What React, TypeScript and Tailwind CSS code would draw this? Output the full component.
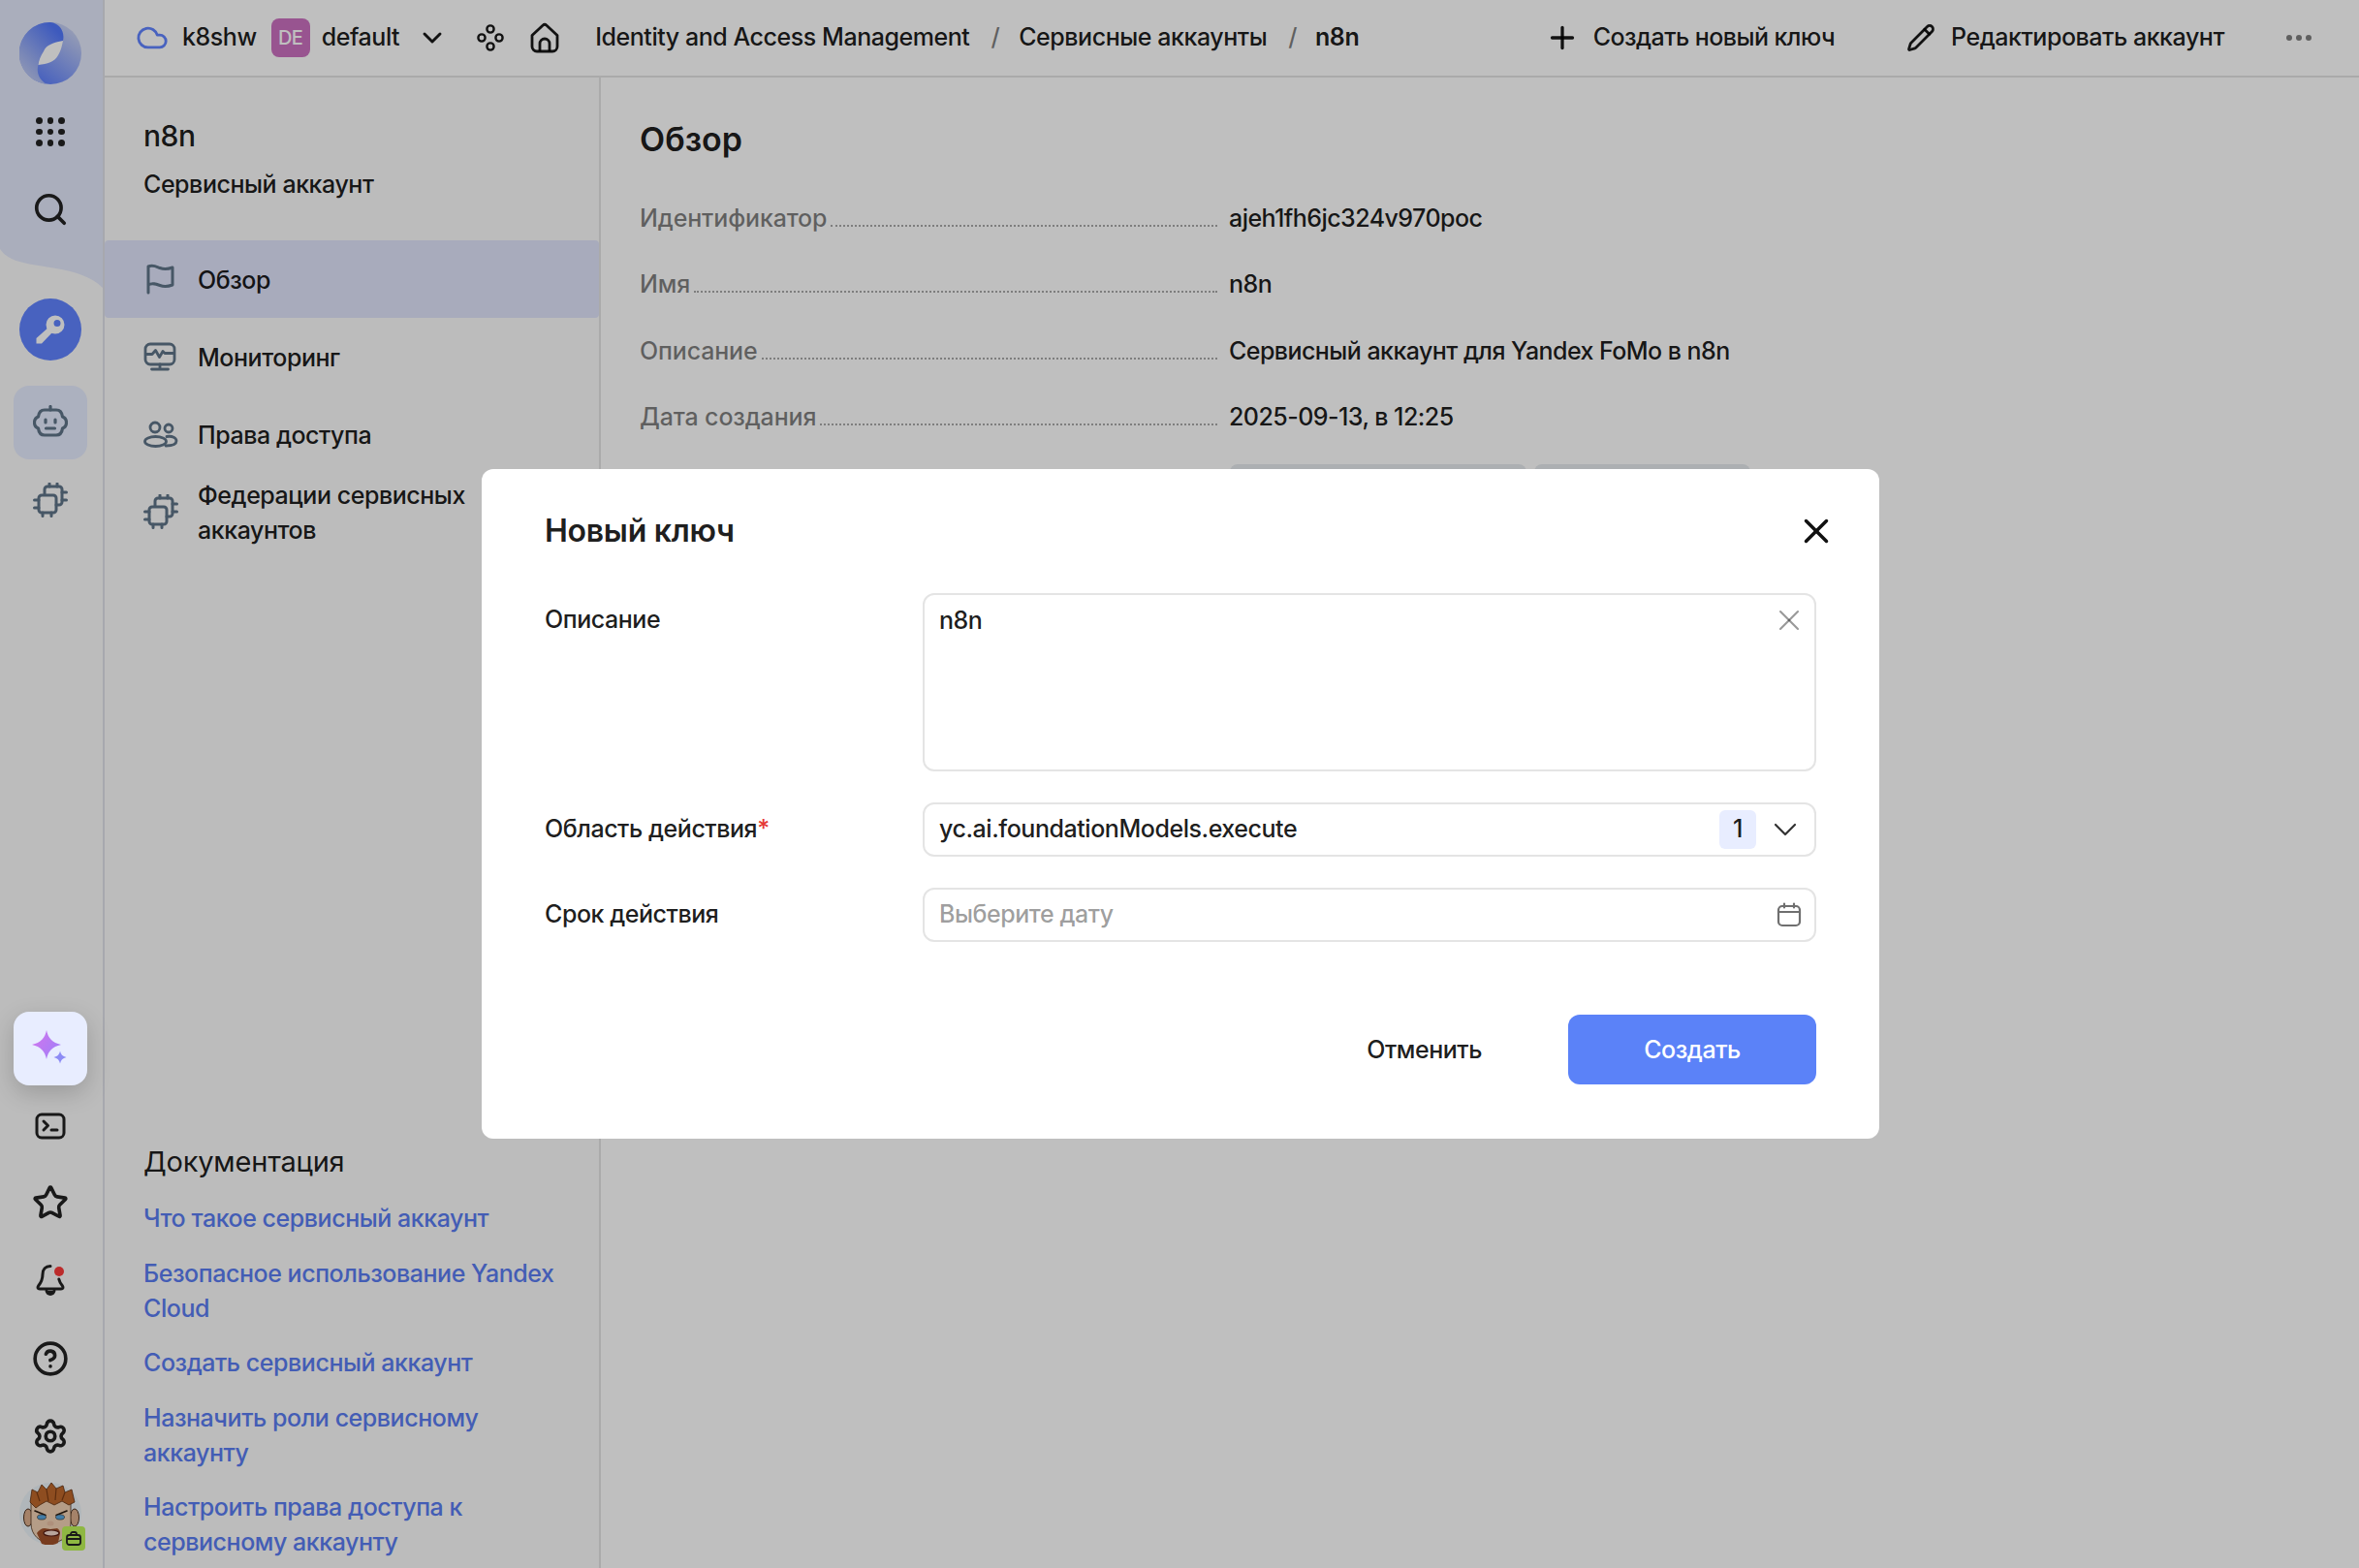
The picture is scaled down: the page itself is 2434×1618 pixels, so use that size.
import React from 'react';
import { ChevronDown, Cloud, Pencil, Plus, X, Search, Star, Settings, CircleHelp } from 'lucide-react';

const iconGray = '#5f7488';

const FlowerIcon = () => (
  <svg width="30" height="30" viewBox="0 0 30 30" fill="none" stroke="currentColor" strokeWidth="2.4">
    <circle cx="15" cy="6" r="3.6" />
    <circle cx="6" cy="15" r="3.6" />
    <circle cx="24" cy="15" r="3.6" />
    <circle cx="15" cy="24" r="3.6" />
  </svg>
);

const HomeIcon = () => (
  <svg width="30" height="32" viewBox="0 0 30 32" fill="none" stroke="currentColor" strokeWidth="2.8" strokeLinejoin="round">
    <path d="M2 13.5 13 3.2a3 3 0 0 1 4 0L28 13.5V25a5 5 0 0 1-5 5H7a5 5 0 0 1-5-5z" />
    <path d="M10 30v-8a5 5 0 0 1 10 0v8" />
  </svg>
);

const Logo = () => (
  <svg width="64" height="64" viewBox="0 0 64 64">
    <defs>
      <linearGradient id="logo-a" x1="0.15" y1="1" x2="0.85" y2="0.1">
        <stop offset="0" stopColor="#4f75ff" />
        <stop offset="1" stopColor="#c9d2f2" />
      </linearGradient>
      <linearGradient id="logo-b" x1="0.1" y1="0.9" x2="0.75" y2="0.05">
        <stop offset="0" stopColor="#c3cdf1" />
        <stop offset="1" stopColor="#5278fd" />
      </linearGradient>
    </defs>
    <circle cx="32" cy="32" r="32" fill="url(#logo-a)" />
    <path d="M32 0A32 32 0 0 0 28 63.8C21 60 17 52 19.5 44 21 30 35 26 45 19 47 10 42 1 32 0z" fill="url(#logo-b)" />
    <path d="M45 19C35 21 28 23 25 30 22 35 20 39 19.5 44 29 43 36 41 40 34 43 29 44 24 45 19z" fill="#fff" />
  </svg>
);

const DotsGrid = () => (
  <div className="grid grid-cols-3 gap-[5px]">
    {Array.from({ length: 9 }).map((_, i) => (
      <span key={i} className="w-[6.5px] h-[6.5px] rounded-full bg-[#222]" />
    ))}
  </div>
);

const KeyIcon = () => (
  <svg width="32" height="32" viewBox="0 0 32 32" fill="none">
    <path fillRule="evenodd" clipRule="evenodd" d="M21 1.500a9.500 9.500 0 1 1 0 19 9.500 9.500 0 0 1 0-19zm2 4.500a3.500 3.500 0 1 0 0 7 3.500 3.500 0 0 0 0-7z" fill="#fff" />
    <path d="M15 13 1.500 25v5.500H7L19 18z" fill="#fff" />
  </svg>
);

const RobotIcon = () => (
  <svg width="36" height="36" viewBox="0 0 36 36" fill="none" stroke={iconGray} strokeWidth="3.2" strokeLinecap="round" strokeLinejoin="round">
    <path d="M18 1.500V5" />
    <path d="M12 5h12c4 0 6 3 6.500 7 2.500 1 4 3 4 6s-1.500 5-4 6c-.5 4-2.500 7-6.500 7H12c-4 0-6-3-6.500-7-2.500-1-4-3-4-6s1.500-5 4-6C6 8 8 5 12 5z" />
    <path d="M13 15v3M23 15v3M13.500 24h9" />
  </svg>
);

const ChipsIcon = () => (
  <svg width="36" height="36" viewBox="0 0 36 36" fill="none" stroke={iconGray} strokeWidth="3" strokeLinecap="round" strokeLinejoin="round">
    <rect x="6" y="13" width="18" height="18" rx="3" />
    <path d="M12 12.500V7a3 3 0 0 1 3-3h12a3 3 0 0 1 3 3v13a3 3 0 0 1-3 3h-3" />
    <path d="M10 31v3.500M19 31v3.500M1.500 18H6M1.500 26H6M17 4V1M25 4V1M30 10h4.500M30 18h4.500" />
  </svg>
);

const FlagIcon = () => (
  <svg width="30" height="32" viewBox="0 0 30 32" fill="none" stroke={iconGray} strokeWidth="3" strokeLinecap="round" strokeLinejoin="round" className="ml-[3px]">
    <path d="M2 30V3c5-2 8 0 12 1.500s9 1 13-.5v18c-4 1.500-9 2-13 .5S6 19.500 2 22" />
  </svg>
);

const MonitorIcon = () => (
  <svg width="34" height="30" viewBox="0 0 34 30" fill="none" stroke={iconGray} strokeWidth="2.8" strokeLinecap="round" strokeLinejoin="round">
    <rect x="2" y="2" width="30" height="21" rx="5" />
    <path d="M2.500 12.500H9l3.500-4 4 7 3.500-6 2 2h9" />
    <path d="M17 23v5M8.500 28h17" />
  </svg>
);

const PeopleIcon = () => (
  <svg width="36" height="28" viewBox="0 0 36 28" fill="none" stroke={iconGray} strokeWidth="2.8" strokeLinecap="round" strokeLinejoin="round">
    <circle cx="12" cy="7" r="5" />
    <circle cx="26" cy="8" r="4" />
    <ellipse cx="12.500" cy="21.500" rx="11" ry="5" />
    <path d="M24 16.500c6-1 10 1.500 10 4.500s-3 5-11 5" />
  </svg>
);

const TerminalIcon = () => (
  <svg width="32" height="28" viewBox="0 0 32 28" fill="none" stroke="#222" strokeWidth="3" strokeLinecap="round" strokeLinejoin="round">
    <rect x="2" y="2" width="28" height="24" rx="5" />
    <path d="m9 9 4.500 4.500L9 18M17 18h6" />
  </svg>
);

const BellIcon = () => (
  <svg width="32" height="34" viewBox="0 0 32 34" fill="none" stroke="#222" strokeWidth="3" strokeLinecap="round" strokeLinejoin="round">
    <path d="M16 2.500c-5 0-8 3.500-8 8.500 0 6-2 9-4.500 12-1 1.500-.5 3 1.500 3h22c2 0 2.500-1.500 1.500-3-1.700-2-3-4-3.700-7" />
    <path d="M12 28c.5 2 2 3.500 4 3.500s3.500-1.500 4-3.500" fill="#222" />
  </svg>
);

const CalendarIcon = () => (
  <svg width="26" height="26" viewBox="0 0 26 26" fill="none" stroke="#6f6f6f" strokeWidth="2.2" strokeLinecap="round">
    <rect x="2" y="4" width="22" height="20" rx="4" />
    <path d="M2 10h22M8 1.500v4M18 1.500v4" />
  </svg>
);

const Sparkle = () => (
  <svg width="36" height="36" viewBox="0 0 36 36" className="-translate-x-[1px] -translate-y-[1px]">
    <defs>
      <linearGradient id="spark" x1="0" y1="0.2" x2="1" y2="0.8">
        <stop offset="0" stopColor="#d076ee" />
        <stop offset="1" stopColor="#a07ff8" />
      </linearGradient>
    </defs>
    <path d="M15 0c1.500 8 6 13 15 15-9 2-13.500 7-15 15-1.500-8-6-13-15-15 9-2 13.500-7 15-15z" fill="url(#spark)" />
    <path d="M29 21.500c.7 3.500 2.500 5.500 6.500 6.500-4 1-5.800 3-6.500 6.500-.7-3.500-2.500-5.500-6.500-6.500 4-1 5.800-3 6.500-6.500z" fill="#8d8cf5" />
  </svg>
);

const Avatar = () => (
  <svg width="64" height="64" viewBox="0 0 64 64">
    <circle cx="32" cy="32" r="32" fill="#ebf3f8" />
    <ellipse cx="9" cy="36" rx="4.500" ry="9" fill="#dcae8c" stroke="#4a2e1c" strokeWidth="1" />
    <ellipse cx="57" cy="36" rx="4.500" ry="9" fill="#dcae8c" stroke="#4a2e1c" strokeWidth="1" />
    <path d="M12 18h41v24c0 12-9 20-20.500 20S12 54 12 42z" fill="#f2d2b4" stroke="#4a2e1c" strokeWidth=".8" />
    <path d="M11 20 13 7l6 3 4-8 5 5 5-7 5 6 7-3 2 7 7-3 3 13-6 3-7-4-8 4-8-4-7 4-4 3z" fill="#be672b" stroke="#5f3012" strokeWidth=".8" />
    <path d="M18 10l3 9M28 7l2 12M38 6l-1 12M47 10l-3 8" stroke="#7c3c14" strokeWidth="1.200" fill="none" />
    <path d="M16 29l11 4.500M49 29l-11 4.500" stroke="#2c1c10" strokeWidth="1.600" fill="none" strokeLinecap="round" />
    <ellipse cx="23" cy="35.500" rx="4.500" ry="2.600" fill="#5aa6dc" stroke="#222" strokeWidth=".6" />
    <ellipse cx="42" cy="35.500" rx="4.500" ry="2.600" fill="#5aa6dc" stroke="#222" strokeWidth=".6" />
    <ellipse cx="32" cy="42" rx="3.500" ry="2.500" fill="#e8c0a4" />
    <path d="M18 52c2-3 5-5 8-5 2 0 4 1 6 1s5-1 7-1c2 1 3 3 3 5l-2 10c-5 3-12 3-17 1z" fill="#a0512a" />
    <ellipse cx="33" cy="52" rx="8" ry="3" fill="#f6dcd0" stroke="#5a1f16" strokeWidth="1.200" />
  </svg>
);

const navItems = [
  { label: 'Обзор', icon: <FlagIcon />, active: true },
  { label: 'Мониторинг', icon: <MonitorIcon /> },
  { label: 'Права доступа', icon: <PeopleIcon /> },
  { label: 'Федерации сервисных аккаунтов', icon: <ChipsIcon /> },
];

const docLinks = [
  'Что такое сервисный аккаунт',
  'Безопасное использование Yandex Cloud',
  'Создать сервисный аккаунт',
  'Назначить роли сервисному аккаунту',
  'Настроить права доступа к сервисному аккаунту',
];

const details = [
  ['Идентификатор', 'ajeh1fh6jc324v970poc'],
  ['Имя', 'n8n'],
  ['Описание', 'Сервисный аккаунт для Yandex FoMo в n8n'],
  ['Дата создания', '2025-09-13, в 12:25'],
];

function Rail() {
  return (
    <aside className="w-[108px] shrink-0 border-r-2 border-[#dfe1e8] bg-[#fbfbfb] pr-[2px] flex flex-col items-center">
      <div className="relative w-full h-[297px] shrink-0 flex flex-col items-center">
        <svg className="absolute inset-0" width="106" height="297" viewBox="0 0 106 297" preserveAspectRatio="none">
          <path d="M0 0h106v297c-12-12-30-17-48-20-22-4-36-5-46-10-6-3-9-6-12-10z" fill="#e3e8fb" />
        </svg>
        <div className="relative mt-[23px]"><Logo /></div>
        <div className="relative mt-[34px]"><DotsGrid /></div>
        <div className="relative mt-[46px] text-[#222]"><Search size={38} strokeWidth={2.3} /></div>
      </div>
      <div className="mt-[11px] w-[64px] h-[64px] rounded-full bg-[#6083ff] flex items-center justify-center"><KeyIcon /></div>
      <div className="mt-[26px] w-[76px] h-[76px] rounded-[16px] bg-[#e6ecff] flex items-center justify-center"><RobotIcon /></div>
      <div className="mt-[24px]"><ChipsIcon /></div>
      <div className="mt-auto w-full flex flex-col items-center pb-[24px]">
        <div className="relative z-50 w-[76px] h-[76px] rounded-[16px] bg-[#e8edff] shadow-[0_8px_24px_rgba(0,0,0,0.18)] flex items-center justify-center"><Sparkle /></div>
        <div className="mt-[28px] h-[28px] flex items-center"><TerminalIcon /></div>
        <div className="mt-[47px] h-[36px] flex items-center text-[#222]"><Star size={38} strokeWidth={2.3} /></div>
        <div className="relative mt-[44px] h-[36px] flex items-center">
          <BellIcon />
          <span className="absolute top-[4px] right-[2px] w-[10px] h-[10px] rounded-full bg-[#fb3b3b]" />
        </div>
        <div className="mt-[45px] h-[36px] flex items-center text-[#222]"><CircleHelp size={38} strokeWidth={2.3} /></div>
        <div className="mt-[44px] h-[36px] flex items-center text-[#222]"><Settings size={38} strokeWidth={2.3} /></div>
        <div className="relative mt-[30px] h-[64px]">
          <Avatar />
          <span className="absolute -right-[4px] -bottom-[6px] w-[24px] h-[25px] rounded-[4px] bg-[#bef558] flex items-center justify-center">
            <svg width="16" height="15" viewBox="0 0 16 15" fill="none" stroke="#222" strokeWidth="1.8"><rect x="1" y="4" width="14" height="10" rx="2.500" /><path d="M5 4V3a2 2 0 0 1 2-2h2a2 2 0 0 1 2 2v1M1 8h14" /></svg>
          </span>
        </div>
      </div>
    </aside>
  );
}

function TopBar() {
  return (
    <header className="h-[80px] shrink-0 border-b-2 border-[#e3e3e3] flex items-center pl-[32px] pr-[49px] text-[25px] tracking-[-0.45px]">
      <Cloud size={34} strokeWidth={2} className="text-[#6083ff]" />
      <span className="ml-[14px]">k8shw</span>
      <span className="ml-[15px] w-[40px] h-[40px] rounded-[8px] bg-[#cb71c0] text-[#fff] text-[20px] font-medium flex items-center justify-center">DE</span>
      <span className="ml-[12px]">default</span>
      <ChevronDown size={32} strokeWidth={2.2} className="ml-[18px]" />
      <span className="ml-[29px]"><FlowerIcon /></span>
      <span className="ml-[26px]"><HomeIcon /></span>
      <span className="ml-[37px]">Identity and Access Management</span>
      <span className="ml-[22px] text-black/50">/</span>
      <span className="ml-[20px]">Сервисные аккаунты</span>
      <span className="ml-[22px] text-black/50">/</span>
      <span className="ml-[19px] font-semibold">n8n</span>
      <Plus size={36} strokeWidth={2.2} className="ml-auto" />
      <span className="ml-[14px] tracking-[-0.55px]">Создать новый ключ</span>
      <Pencil size={30} strokeWidth={2.2} className="ml-[74px]" />
      <span className="ml-[16px]">Редактировать аккаунт</span>
      <span className="ml-[64px] flex gap-[4px]">
        <i className="w-[6px] h-[6px] rounded-full bg-black/50" />
        <i className="w-[6px] h-[6px] rounded-full bg-black/50" />
        <i className="w-[6px] h-[6px] rounded-full bg-black/50" />
      </span>
    </header>
  );
}

function SideNav() {
  return (
    <nav className="w-[512px] shrink-0 border-r-2 border-[#e3e3e3] bg-[#fbfbfb] flex flex-col text-[25px] tracking-[-0.45px]">
      <div className="pl-[40px] pt-[40px]">
        <div className="text-[30px] leading-[40px]">n8n</div>
        <div className="mt-[12px] leading-[36px]">Сервисный аккаунт</div>
      </div>
      <ul className="mt-[40px]">
        {navItems.map((item) => (
          <li key={item.label} className={`h-[80px] pl-[40px] pr-[100px] flex items-center ${item.active ? 'bg-[#e0e5fb] rounded-[4px]' : ''}`}>
            <span className="w-[56px] shrink-0 flex">{item.icon}</span>
            <span className="leading-[36px] pt-[2px]">{item.label}</span>
          </li>
        ))}
      </ul>
      <div className="mt-auto pl-[40px] pr-[30px] pb-[9px]">
        <h3 className="text-[29px] leading-[40px] font-normal tracking-[-0.2px]">Документация</h3>
        <div className="mt-[20px] flex flex-col gap-[20.5px] leading-[36px] text-[#5a7cf2]">
          {docLinks.map((link) => (
            <a key={link}>{link}</a>
          ))}
        </div>
      </div>
    </nav>
  );
}

function Overview() {
  return (
    <main className="flex-1 pl-[40px] pt-[40px] text-[25px]">
      <h1 className="text-[34px] leading-[48px] font-semibold">Обзор</h1>
      <dl className="mt-[39px] flex flex-col">
        {details.map(([label, value]) => (
          <div key={label} className="h-[68.3px] flex items-baseline">
            <dt className="w-[596px] flex items-baseline text-black/50 tracking-[-0.15px]">
              <span>{label}</span>
              <span className="flex-1 ml-[4px] border-b-2 border-dotted border-[#a8a8a8]" />
            </dt>
            <dd className="ml-[12px] tracking-[-0.55px]">{value}</dd>
          </div>
        ))}
      </dl>
      <div className="ml-[609px] -mt-[1px] flex gap-[8px]">
        <div className="w-[306px] h-[56px] rounded-[8px] bg-[#e6eaee]" />
        <div className="w-[223px] h-[56px] rounded-[8px] bg-[#e6eaee]" />
      </div>
    </main>
  );
}

function KeyDialog() {
  return (
    <div className="w-[1442px] h-[691px] rounded-[12px] bg-white pt-[44px] px-[65px] pb-[56px] flex flex-col text-[25px] tracking-[-0.45px] text-black/90">
      <div className="flex items-center justify-between h-[40px]">
        <h2 className="text-[32px] font-semibold leading-[40px] tracking-[-0.27px]">Новый ключ</h2>
        <X size={42} strokeWidth={2} className="-mr-[21px] text-[#111]" />
      </div>
      <div className="mt-[44px] grid grid-cols-[390px_922px] gap-y-[32px] items-center">
        <label className="self-start pt-[9px] leading-[36px]">Описание</label>
        <div className="relative h-[184px] rounded-[12px] border-2 border-[#e4e4e4] pl-[15px] pt-[8px] leading-[36px]">
          n8n
          <X size={36} strokeWidth={1.4} className="absolute right-[8px] top-[8px] text-black/40" />
        </div>
        <label>Область действия<span className="text-[#e53935]">*</span></label>
        <div className="h-[56px] rounded-[12px] border-2 border-[#e4e4e4] pl-[15px] pr-[18px] flex items-center">
          <span className="flex-1">yc.ai.foundationModels.execute</span>
          <span className="w-[38px] h-[40px] rounded-[6px] bg-[#e8edff] flex items-center justify-center">1</span>
          <svg width="24" height="14" viewBox="0 0 24 14" fill="none" stroke="#333" strokeWidth="2.2" strokeLinecap="round" strokeLinejoin="round" className="ml-[18px]">
            <path d="m2 2 10 10L22 2" />
          </svg>
        </div>
        <label>Срок действия</label>
        <div className="h-[56px] rounded-[12px] border-2 border-[#e4e4e4] pl-[15px] pr-[13px] flex items-center justify-between">
          <span className="text-black/40">Выберите дату</span>
          <CalendarIcon />
        </div>
      </div>
      <div className="mt-auto flex items-center justify-end">
        <button className="text-[25px] pt-[1px]">Отменить</button>
        <button className="ml-[89px] w-[256px] h-[72px] rounded-[12px] bg-[#5b82f8] text-white text-[25px] pt-[1px]">Создать</button>
      </div>
    </div>
  );
}

export default function App() {
  return (
    <div className="relative h-screen w-full overflow-hidden bg-white flex text-black/90 font-[450] [font-family:Inter,'Noto_Sans',sans-serif]">
      <Rail />
      <div className="flex-1 flex flex-col min-w-0">
        <TopBar />
        <div className="flex-1 flex min-h-0">
          <SideNav />
          <Overview />
        </div>
      </div>
      <div className="absolute inset-0 z-40 bg-black/25 flex justify-center pt-[484px] pl-[2px]">
        <KeyDialog />
      </div>
    </div>
  );
}
